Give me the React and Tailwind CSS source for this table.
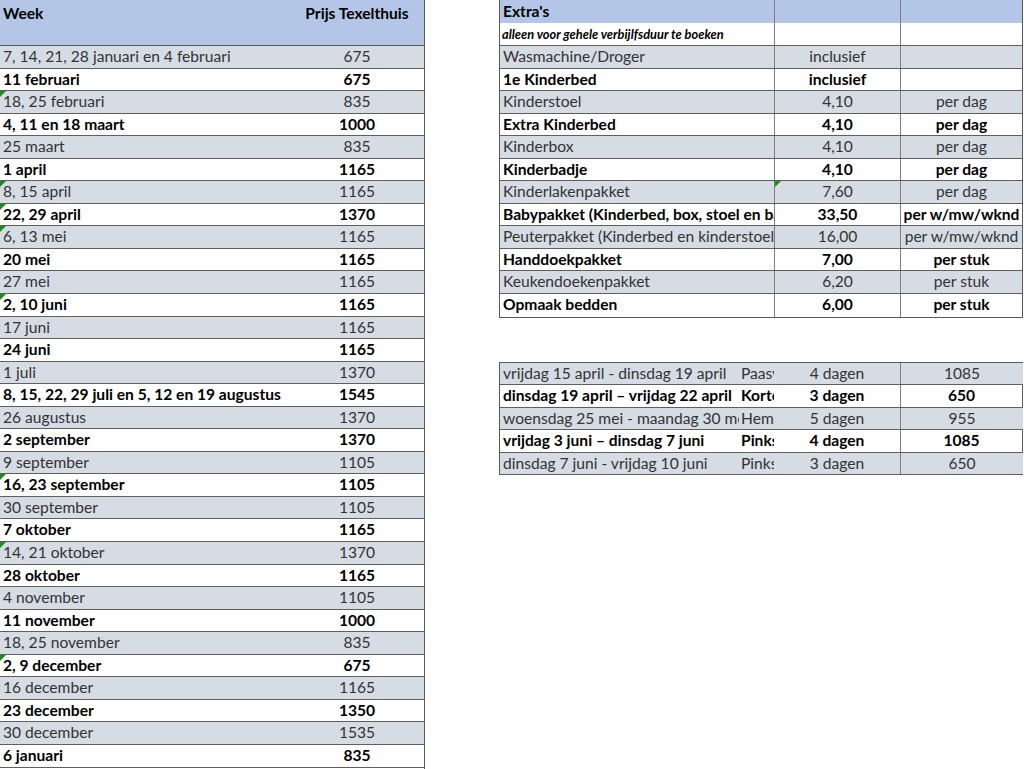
const weeks = [
  ['7, 14, 21, 28 januari en 4 februari', '675'],
  ['11 februari', '675'],
  ['18, 25 februari', '835', true],
  ['4, 11 en 18 maart', '1000'],
  ['25 maart', '835'],
  ['1 april', '1165'],
  ['8, 15 april', '1165', true],
  ['22, 29 april', '1370', true],
  ['6, 13 mei', '1165', true],
  ['20 mei', '1165'],
  ['27 mei', '1165'],
  ['2, 10 juni', '1165', true],
  ['17 juni', '1165'],
  ['24 juni', '1165'],
  ['1 juli', '1370'],
  ['8, 15, 22, 29 juli en 5, 12 en 19 augustus', '1545'],
  ['26 augustus', '1370'],
  ['2 september', '1370'],
  ['9 september', '1105'],
  ['16, 23 september', '1105', true],
  ['30 september', '1105'],
  ['7 oktober', '1165'],
  ['14, 21 oktober', '1370', true],
  ['28 oktober', '1165'],
  ['4 november', '1105'],
  ['11 november', '1000'],
  ['18, 25 november', '835'],
  ['2, 9 december', '675', true],
  ['16 december', '1165'],
  ['23 december', '1350'],
  ['30 december', '1535'],
  ['6 januari', '835'],
];

const extras = [
  ['Wasmachine/Droger', 'inclusief', ''],
  ['1e Kinderbed', 'inclusief', ''],
  ['Kinderstoel', '4,10', 'per dag'],
  ['Extra Kinderbed', '4,10', 'per dag'],
  ['Kinderbox', '4,10', 'per dag'],
  ['Kinderbadje', '4,10', 'per dag'],
  ['Kinderlakenpakket', '7,60', 'per dag', true],
  ['Babypakket (Kinderbed, box, stoel en bad)', '33,50', 'per w/mw/wknd'],
  ['Peuterpakket (Kinderbed en kinderstoel)', '16,00', 'per w/mw/wknd'],
  ['Handdoekpakket', '7,00', 'per stuk'],
  ['Keukendoekenpakket', '6,20', 'per stuk'],
  ['Opmaak bedden', '6,00', 'per stuk'],
];

const shorts = [
  ['vrijdag 15 april - dinsdag 19 april', 'Paasweekend', '4 dagen', '1085'],
  ['dinsdag 19 april \u2013 vrijdag 22 april', 'Korte week', '3 dagen', '650'],
  ['woensdag 25 mei - maandag 30 mei', 'Hemelvaart', '5 dagen', '955'],
  ['vrijdag 3 juni \u2013 dinsdag 7 juni', 'Pinksteren', '4 dagen', '1085'],
  ['dinsdag 7 juni - vrijdag 10 juni', 'Pinksteren', '3 dagen', '650'],
];

function Flag() {
  return (
    <span className="absolute left-0 top-0 w-0 h-0 border-t-[6px] border-r-[6px] border-t-[#1e8c1e] border-r-transparent" />
  );
}

export default function App() {
  return (
    <div
      className="w-[1024px] h-[769px] bg-white flex text-[15.6px] leading-none overflow-hidden"
      style={{ fontFamily: 'Lato, "Open Sans", sans-serif' }}
    >
      {/* weekprijzen */}
      <div className="w-[425px] shrink-0 border-r border-[#595959]">
        <div className="h-[46px] flex bg-[#b4c6e7] border-b border-[#595959] font-bold text-black pt-[6px]">
          <div className="flex-1 pl-[3px]">Week</div>
          <div className="w-[134px] text-center">Prijs Texelthuis</div>
        </div>
        {weeks.map(([w, p, flag], i) => {
          const bold = i % 2 === 1;
          return (
            <div
              key={w}
              className={`relative h-[22.56px] flex items-center border-b border-[#5f5f5f] ${
                bold ? 'bg-white font-bold text-black' : 'bg-[#d6dce4] text-[#333]'
              }`}
            >
              {flag && <Flag />}
              <div className="flex-1 pl-[3px] whitespace-nowrap">{w}</div>
              <div className="w-[134px] text-center">{p}</div>
            </div>
          );
        })}
      </div>

      <div className="w-[74px] shrink-0" />

      <div className="w-[524px] shrink-0">
        {/* extra's */}
        <div className="border-l border-r border-b border-[#595959]">
          <div className="h-[23px] flex bg-[#b4c6e7] font-bold text-black">
            <div className="w-[274px] pl-[3px] flex items-center">Extra's</div>
            <div className="w-[126px] border-l border-[#7f7f7f]" />
            <div className="flex-1 border-l border-[#7f7f7f]" />
          </div>
          <div className="h-[23px] flex bg-white border-b border-[#5f5f5f]">
            <div className="w-[274px] pl-[2px] flex items-center text-[12.8px] font-bold italic text-black whitespace-nowrap overflow-hidden">
              alleen voor gehele verbijlfsduur te boeken
            </div>
            <div className="w-[126px] border-l border-[#7f7f7f]" />
            <div className="flex-1 border-l border-[#7f7f7f]" />
          </div>
          {extras.map(([n, p, u, flag], i) => {
            const bold = i % 2 === 1;
            return (
              <div
                key={n}
                className={`h-[22.56px] flex ${i < extras.length - 1 ? 'border-b border-[#5f5f5f]' : ''} ${
                  bold ? 'bg-white font-bold text-black' : 'bg-[#d6dce4] text-[#333]'
                }`}
              >
                <div className="w-[274px] pl-[3px] flex items-center overflow-hidden whitespace-nowrap">{n}</div>
                <div className="relative w-[126px] border-l border-[#7f7f7f] flex items-center justify-center">
                  {flag && <Flag />}
                  {p}
                </div>
                <div className="flex-1 border-l border-[#7f7f7f] flex items-center justify-center whitespace-nowrap">
                  {u}
                </div>
              </div>
            );
          })}
        </div>

        {/* korte verblijven */}
        <div className="mt-[44px] border-t border-l border-[#595959]">
          {shorts.map(([d, t, n, p], i) => {
            const bold = i % 2 === 1;
            return (
              <div
                key={d}
                className={`h-[22.56px] flex border-b border-[#5f5f5f] ${
                  bold ? 'bg-white font-bold text-black border-r' : 'bg-[#d6dce4] text-[#333]'
                }`}
              >
                <div className="w-[239px] pl-[3px] flex items-center overflow-hidden whitespace-nowrap">{d}</div>
                <div className="w-[35px] pl-[2px] flex items-center overflow-hidden whitespace-nowrap">{t}</div>
                <div className="w-[126px] flex items-center justify-center whitespace-nowrap">{n}</div>
                <div className="flex-1 border-l border-[#7f7f7f] flex items-center justify-center">{p}</div>
              </div>
            );
          })}
        </div>
      </div>
    </div>
  );
}
